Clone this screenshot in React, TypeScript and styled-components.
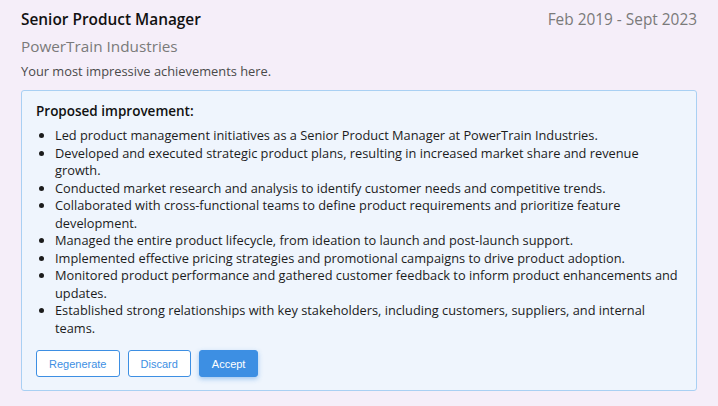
import React from "react";
import styled, { createGlobalStyle } from "styled-components";

const Global = createGlobalStyle`
  html, body { margin: 0; padding: 0; background: #f5eef9; }
  body { font-family: "Open Sans", "Noto Sans", sans-serif; color: #1c1c1c; }
`;

const Page = styled.div`
  padding: 8px 21px 0 21px;
  display: flex;
  flex-direction: column;
`;

const HeaderRow = styled.div`
  display: flex;
  justify-content: space-between;
  align-items: center;
  line-height: 24px;
`;

const Title = styled.div`
  font-size: 15.4px;
  font-weight: 600;
  color: #111111;
`;

const Dates = styled.div`
  font-size: 15.4px;
  color: #7a7a7a;
`;

const Company = styled.div`
  margin-top: 2px;
  font-size: 15.3px;
  line-height: 24px;
  color: #7a7a7a;
`;

const Description = styled.div`
  margin-top: 3px;
  font-size: 12.85px;
  line-height: 20px;
  color: #4a4a4a;
`;

const Suggestion = styled.div`
  margin-top: 9px;
  background: #eff5fd;
  border: 1px solid #a9d0f3;
  border-radius: 3px;
  padding: 10px 14px 13px 14px;
`;

const SuggestionTitle = styled.div`
  font-size: 13.5px;
  font-weight: 600;
  line-height: 20px;
  color: #111111;
`;

const List = styled.ul`
  margin: 6px 0 0 0;
  padding-left: 19px;
  font-size: 12.8px;
  line-height: 17.5px;
  color: #1c1c1c;
`;

const Actions = styled.div`
  margin-top: 13px;
  display: flex;
  gap: 8px;
`;

const Button = styled.button<{ $primary?: boolean }>`
  height: 27px;
  padding: 0 12px;
  border-radius: 3px;
  font-family: "Liberation Sans", Arial, sans-serif;
  font-size: 11px;
  cursor: pointer;
  border: 1px solid #3d8fe3;
  background: ${(p) => (p.$primary ? "#3d8fe3" : "#ffffff")};
  color: ${(p) => (p.$primary ? "#ffffff" : "#3d8fe3")};
  box-shadow: ${(p) => (p.$primary ? "0 2px 5px rgba(61,143,227,0.45)" : "none")};
`;

const items = [
  "Led product management initiatives as a Senior Product Manager at PowerTrain Industries.",
  "Developed and executed strategic product plans, resulting in increased market share and revenue growth.",
  "Conducted market research and analysis to identify customer needs and competitive trends.",
  "Collaborated with cross-functional teams to define product requirements and prioritize feature development.",
  "Managed the entire product lifecycle, from ideation to launch and post-launch support.",
  "Implemented effective pricing strategies and promotional campaigns to drive product adoption.",
  "Monitored product performance and gathered customer feedback to inform product enhancements and updates.",
  "Established strong relationships with key stakeholders, including customers, suppliers, and internal teams.",
];

export default function App() {
  return (
    <>
      <Global />
      <Page>
        <HeaderRow>
          <Title>Senior Product Manager</Title>
          <Dates>Feb 2019 - Sept 2023</Dates>
        </HeaderRow>
        <Company>PowerTrain Industries</Company>
        <Description>Your most impressive achievements here.</Description>
        <Suggestion>
          <SuggestionTitle>Proposed improvement:</SuggestionTitle>
          <List>
            {items.map((t) => (
              <li key={t}>{t}</li>
            ))}
          </List>
          <Actions>
            <Button>Regenerate</Button>
            <Button>Discard</Button>
            <Button $primary>Accept</Button>
          </Actions>
        </Suggestion>
      </Page>
    </>
  );
}
